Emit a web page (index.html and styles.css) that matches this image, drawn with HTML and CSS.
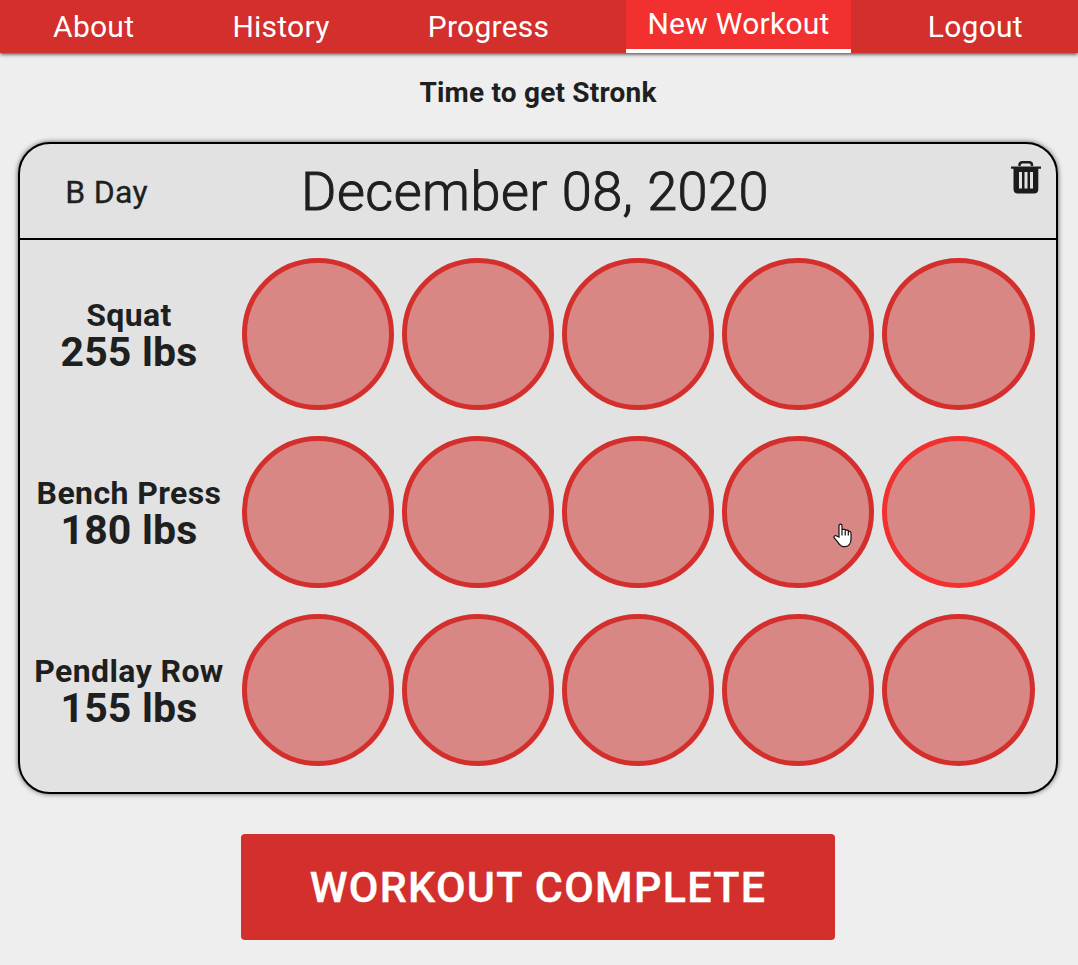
FILE: index.html
```html
<!DOCTYPE html>
<html lang="en">
<head>
<meta charset="utf-8">
<title>New Workout</title>
<link rel="stylesheet" href="styles.css">
</head>
<body>
<nav class="nav">
  <a class="nav-link">About</a>
  <a class="nav-link">History</a>
  <a class="nav-link">Progress</a>
  <a class="nav-link active">New Workout</a>
  <a class="nav-link">Logout</a>
</nav>
<main class="page">
  <h1 class="title">Time to get Stronk</h1>
  <section class="card">
    <header class="card-header">
      <span class="day">B Day</span>
      <h2 class="date">December 08, 2020</h2>
      <button class="trash" aria-label="Delete workout">
        <svg width="30" height="34" viewBox="0 0 30 34"><path d="M8.500 6V5Q8.500 2.200 11.500 2.200h6.500Q21 2.200 21 5V6" fill="none" stroke="#1c1c1e" stroke-width="2.400"/><path fill="#1c1c1e" fill-rule="evenodd" d="M0 6.500h30v2.200h-2.700V29q0 4.500-4.500 4.500H7Q2.500 33.500 2.500 29V8.700H0zM8 12v16.500h3V12zm5.500 0v16.500h3V12zm5.500 0v16.500h3V12z"/></svg>
      </button>
    </header>
    <div class="exercises">
      <div class="exercise">
        <div class="label"><span class="name">Squat</span><span class="weight">255 lbs</span></div>
        <div class="sets"><button class="set"></button><button class="set"></button><button class="set"></button><button class="set"></button><button class="set"></button></div>
      </div>
      <div class="exercise">
        <div class="label"><span class="name">Bench Press</span><span class="weight">180 lbs</span></div>
        <div class="sets"><button class="set"></button><button class="set"></button><button class="set"></button><button class="set"></button><button class="set focused"></button></div>
      </div>
      <div class="exercise">
        <div class="label"><span class="name">Pendlay Row</span><span class="weight">155 lbs</span></div>
        <div class="sets"><button class="set"></button><button class="set"></button><button class="set"></button><button class="set"></button><button class="set"></button></div>
      </div>
    </div>
  </section>
  <button class="complete">WORKOUT COMPLETE</button>
</main>
<svg class="cursor" width="19" height="25" viewBox="0 0 19 25"><path d="M6 14V3Q6 1.200 7.500 1.200T9 3v4Q9 6.300 10.800 6.300T12.500 7.500Q12.700 7 14.200 7.200T15.500 8.500Q18 8 18 10.500V16c0 5-2.500 7.700-6.500 7.700-4.500 0-5.500-3-7-5L1.200 15c-1-2 1-3 2.500-2z" fill="#fff" stroke="#111" stroke-width="1.200"/><path d="M9 7v5.500M12.200 7.500v5M15.300 8.500v4" stroke="#111" stroke-width="1.200"/></svg>
</body>
</html>
```
FILE: styles.css
```css
* { box-sizing: border-box; }
body {
  margin: 0;
  height: 965px;
  overflow: hidden;
  background: #eee;
  color: #1e1f1f;
  font-family: Roboto, sans-serif;
}
button { padding: 0; border: 0; background: none; font-family: inherit; color: inherit; }
.nav {
  display: flex;
  justify-content: space-around;
  height: 53px;
  padding: 0 6px 0 4px;
  background: #d32f2d;
  box-shadow: 0 1px 4px #333;
}
.nav-link {
  height: 53px;
  padding: 0 21.300px;
  color: #fff;
  font-size: 30px;
  line-height: 53px;
  letter-spacing: 0.250px;
  white-space: nowrap;
}
.nav-link.active {
  background: #f2302f;
  border-bottom: 4px solid #fff;
  line-height: 48px;
}
.page { display: flex; flex-direction: column; align-items: center; }
.title { margin: 23px 2px 32px 0; font-size: 28px; font-weight: 700; line-height: 34px; letter-spacing: 0.200px; }
.card {
  width: 1040px;
  height: 652px;
  margin-right: 2px;
  border: 2px solid #000;
  border-radius: 32px;
  background: #e2e2e2;
  box-shadow: 0 0 5px #555;
}
.card-header {
  display: grid;
  grid-template-columns: 173px 684px 1fr;
  align-items: center;
  height: 96px;
  border-bottom: 2px solid #000;
}
.day { padding-bottom: 1px; text-align: center; font-size: 32px; letter-spacing: 0.300px; -webkit-text-stroke: 0.300px; }
.date {
  margin: 0;
  text-align: center;
  font-size: 54px;
  font-weight: 300;
  line-height: 96px;
  letter-spacing: 0.500px;
  -webkit-text-stroke: 1px;
  white-space: nowrap;
}
.trash { justify-self: end; align-self: start; height: 34px; margin: 16px 15px 0 0; }
.trash svg { display: block; }
.exercises { display: grid; row-gap: 26px; padding-top: 18px; }
.exercise { display: grid; grid-template-columns: 218px 1fr; align-items: center; height: 152px; padding-left: 4px; }
.label { display: flex; flex-direction: column; align-items: center; width: 210px; white-space: nowrap; }
.name { font-size: 32px; line-height: 37px; font-weight: 700; letter-spacing: 0.400px; }
.weight { font-size: 41px; line-height: 37px; font-weight: 700; letter-spacing: 0.200px; }
.sets { display: flex; gap: 8px; }
.set { width: 152px; height: 152px; border: 5px solid #d32f2d; border-radius: 50%; background: #d98785; }
.set:last-child { width: 153px; }
.set.focused { border-color: #f2302f; }
.complete {
  width: 594px;
  height: 106px;
  margin: 40px 2px 0 0;
  border-radius: 4px;
  background: #d32f2d;
  color: #fff;
  font-size: 43px;
  font-weight: 500;
  letter-spacing: 1.300px;
  -webkit-text-stroke: 0.400px;
}
.cursor { position: absolute; left: 833px; top: 523px; }
```
